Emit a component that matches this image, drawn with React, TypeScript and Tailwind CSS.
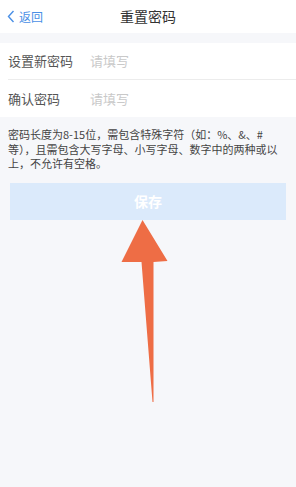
import React from "react";

export default function App() {
  return (
    <div
      className="relative w-[296px] h-[487px] bg-[#f6f7fa] overflow-hidden"
      style={{ fontFamily: '"Noto Sans CJK SC", "Noto Sans", sans-serif' }}
    >
      <div className="h-[33px] bg-white flex items-center relative">
        <div className="flex items-center pl-[7px] text-[#4a8fe6] text-[12px]">
          <svg width="8" height="13" viewBox="0 0 8 13" className="mr-[4px]">
            <path d="M6.5 1 L1.5 6.5 L6.5 12" fill="none" stroke="#4a8fe6" strokeWidth="1.4" />
          </svg>
          <span>返回</span>
        </div>
        <div className="absolute left-0 right-0 text-center text-[14px] text-[#333] pointer-events-none">
          重置密码
        </div>
      </div>
      <div className="mt-[10px] bg-white pl-[8px]">
        <div className="h-[37px] flex items-center border-b border-[#ececec] text-[13px]">
          <span className="w-[82px] text-[#555]">设置新密码</span>
          <span className="text-[#c9c9c9]">请填写</span>
        </div>
        <div className="h-[37px] flex items-center text-[13px]">
          <span className="w-[82px] text-[#555]">确认密码</span>
          <span className="text-[#c9c9c9]">请填写</span>
        </div>
      </div>
      <div className="px-[8px] pt-[10px] text-[11px] leading-[14.5px] text-[#444] whitespace-nowrap">
        密码长度为8-15位，需包含特殊字符（如：%、&amp;、#
        <br />
        等），且需包含大写字母、小写字母、数字中的两种或以
        <br />
        上，不允许有空格。
      </div>
      <div className="mx-[10px] mt-[12px] h-[37px] bg-[#dbeafb] flex items-center justify-center text-white text-[14px] font-bold">
        保存
      </div>
      <svg
        className="absolute left-0 top-0"
        width="296"
        height="487"
        viewBox="0 0 296 487"
      >
        <path
          d="M142.5 220 L167.5 261 L153.5 262 L153.5 402 L152.5 402 L141.5 262 L121.5 262 Z"
          fill="#ee6d45"
        />
      </svg>
    </div>
  );
}
